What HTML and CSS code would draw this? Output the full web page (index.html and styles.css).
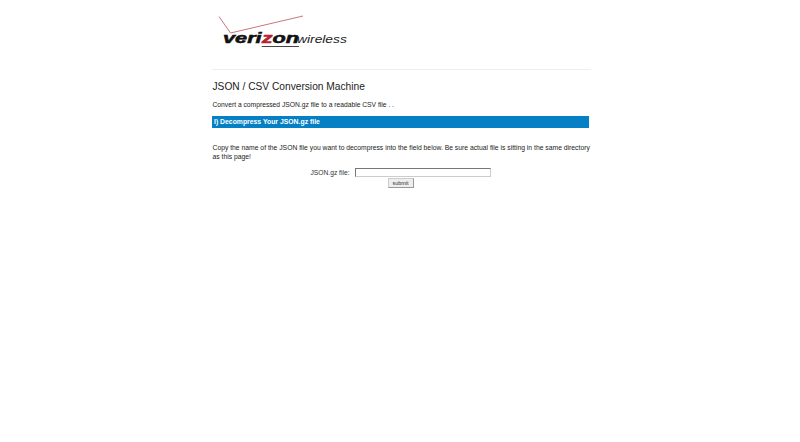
FILE: index.html
```html
<!DOCTYPE html>
<html>
<head>
<meta charset="utf-8">
<title>JSON / CSV Conversion Machine</title>
<link rel="stylesheet" href="styles.css">
</head>
<body>
<div class="page">
  <header class="masthead">
    <div class="logo">
      <svg class="check" width="90" height="32" viewBox="0 0 90 32"><path d="M1 1.5 L12.5 18 L85 1" fill="none" stroke="#c0505a" stroke-width="0.8"/></svg>
      <div class="wordmark"><span class="vz">veri<span class="zon"><span class="z">z</span>on</span></span><span class="wl">wireless</span></div>
    </div>
  </header>
  <h1 class="title">JSON / CSV Conversion Machine</h1>
  <p class="intro">Convert a compressed JSON.gz file to a readable CSV file . .</p>
  <h2 class="bar">I) Decompress Your JSON.gz file</h2>
  <p class="copy">Copy the name of the JSON file you want to decompress into the field below. Be sure actual file is sitting in the same directory as this page!</p>
  <form class="form">
    <div class="row"><label class="label">JSON.gz file:</label><input class="field" type="text"></div>
    <div class="actions"><button class="submit" type="button">submit</button></div>
  </form>
</div>
</body>
</html>
```

FILE: styles.css
```css
html, body { margin: 0; padding: 0; background: #fff; }
body { font-family: "Liberation Sans", Arial, sans-serif; color: #222; height: 442px; overflow: hidden; }
.page { width: 377px; margin-left: 212px; }
.masthead { height: 69px; border-bottom: 1px solid #eee; width: 379px; }
.logo { position: relative; height: 69px; }
.check { position: absolute; left: 6px; top: 15px; }
.wordmark { position: absolute; left: 11px; top: 30px; white-space: nowrap; line-height: 16px; display: flex; align-items: baseline; }
.vz { display: inline-block; width: 74px; font-size: 14px; font-weight: bold; font-style: italic; color: #111; -webkit-text-stroke: 0.5px #111; transform: scaleX(1.55); transform-origin: left center; }
.zon { border-bottom: 1px solid #444; }
.z { color: #b8202c; -webkit-text-stroke: 0.5px #b8202c; }
.wl { display: inline-block; font-size: 10px; font-style: italic; color: #222; transform: scaleX(1.38); transform-origin: left center; }
.title { font-size: 10.2px; font-weight: normal; line-height: 13px; margin: 10px 0 0; padding-left: 0.5px; color: #222; }
.intro { font-size: 6.72px; line-height: 9px; margin: 7px 0 0; padding-left: 0.5px; color: #222; }
.bar { font-size: 6.85px; font-weight: bold; line-height: 11px; height: 12px; margin: 7px 0 0; padding-left: 2px; background: #0680c4; color: #fff; }
.copy { font-size: 6.79px; line-height: 9px; margin: 15px -3px 0 0; padding-left: 0.5px; color: #222; }
.form { margin-top: 6px; }
.row { display: flex; align-items: center; justify-content: center; gap: 5px; height: 10px; }
.label { font-size: 6.7px; color: #333; }
.field { width: 136px; height: 9px; box-sizing: border-box; padding: 0; margin: 0; background: #fff; border: 1px solid #ccc; border-top-color: #777; border-left-color: #777; border-radius: 0; }
.actions { display: flex; justify-content: center; margin-top: 1px; }
.submit { width: 26px; height: 10px; padding: 0; font-family: "Liberation Sans", Arial, sans-serif; font-size: 5.5px; line-height: 7px; color: #333; background: #eee; border: 1px solid #ccc; border-right-color: #999; border-bottom-color: #999; border-radius: 0; }
```
